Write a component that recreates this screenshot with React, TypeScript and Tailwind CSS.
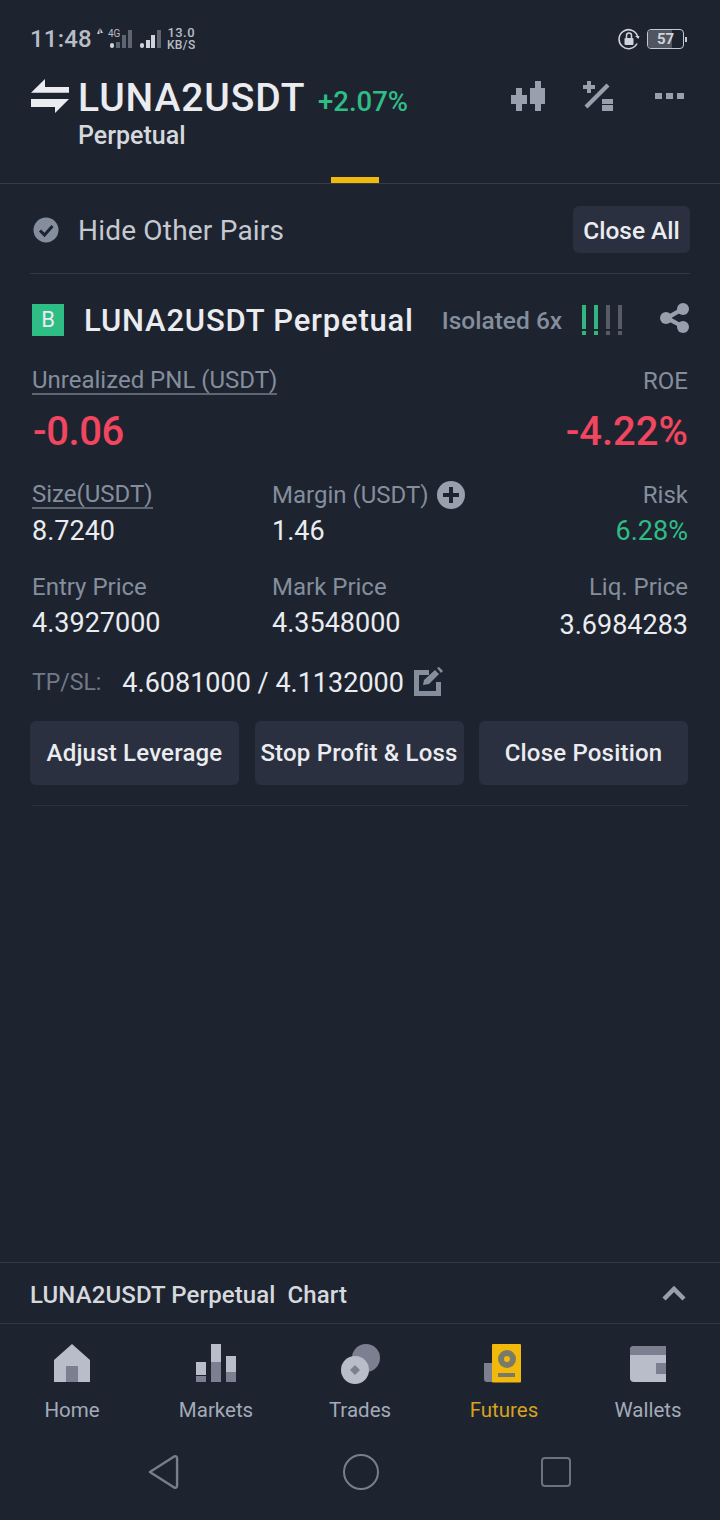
import { ReactNode } from "react";

const font = "font-['Roboto',sans-serif]";

function Stat({ label, value, align = "left", under = false, valueClass = "text-[#eaecef]", extra }: { label: string; value: string; align?: "left" | "right"; under?: boolean; valueClass?: string; extra?: ReactNode }) {
  return (
    <div className={align === "right" ? "flex flex-col items-end" : "flex flex-col items-start"}>
      <div className="flex h-[28px] items-center gap-[8px] text-[24px] leading-[28px] text-[#848e9c]">
        <span className={under ? "border-b-2 border-[#5e6673] leading-[26px]" : ""}>{label}</span>
        {extra}
      </div>
      <div className={`mt-[7px] h-[30px] text-[27px] leading-[30px] ${valueClass}`}>{value}</div>
    </div>
  );
}

function ActionButton({ children }: { children: ReactNode }) {
  return (
    <button className="flex h-[64px] w-[209px] items-center justify-center rounded-[6px] bg-[#2b3040] text-[24px] font-medium tracking-[0.2px] whitespace-nowrap text-[#eaecef]">
      {children}
    </button>
  );
}

function NavItem({ label, active, children }: { label: string; active?: boolean; children: ReactNode }) {
  return (
    <div className="flex w-[144px] flex-col items-center">
      <div className="h-[40px] w-[60px]">{children}</div>
      <div className={`mt-[13px] text-[20.500px] leading-[26px] ${active ? "text-[#d7a21f]" : "text-[#a3abb8]"}`}>{label}</div>
    </div>
  );
}

function StatusBar() {
  return (
    <div className="flex h-[30px] items-center justify-between pr-[33px] pl-[30px] text-[#b7bdc6]">
      <div className="flex items-center">
        <span className="text-[24px] leading-[30px] font-medium tracking-[0.2px]">11:48</span>
        <svg width="71" height="30" viewBox="0 0 71 30" className="ml-[4px]">
          <path d="M1 10l2.500-6v6zM4.500 4 7 9H4.500z" fill="#c4c8d0" />
          <text x="12" y="13" fontSize="10" fill="#b7bdc6" fontFamily="Roboto">4G</text>
          <rect x="14" y="19" width="4" height="5" rx="2" fill="#d0d3d9" />
          <rect x="20" y="18" width="4" height="6" fill="#5e6470" />
          <rect x="26" y="11" width="4" height="13" fill="#5e6470" />
          <rect x="32" y="6" width="4" height="18" fill="#5e6470" />
          <rect x="44" y="19" width="4" height="5" rx="2" fill="#d0d3d9" />
          <rect x="50" y="16" width="4" height="8" fill="#d0d3d9" />
          <rect x="55" y="11" width="4" height="13" fill="#d0d3d9" />
          <rect x="61" y="6" width="4" height="18" fill="#5e6470" />
        </svg>
        <div className="flex flex-col items-center text-[12px] leading-[12px] font-medium tracking-[0.4px]">
          <span className="text-[13px]">13.0</span>
          <span>KB/S</span>
        </div>
      </div>
      <div className="flex items-center gap-[7px]">
        <svg width="22" height="22" viewBox="0 0 22 22" fill="none">
          <path d="M19 15.500A9.500 9.500 0 1 1 19.500 8" stroke="#d0d3d9" strokeWidth="1.600" />
          <path d="M17 8h4.500l-1 3z" fill="#d0d3d9" />
          <rect x="6.500" y="10" width="9" height="7" rx="1" fill="#d0d3d9" />
          <path d="M8.500 10V7.500a2.500 2.500 0 0 1 5 0V10" stroke="#d0d3d9" strokeWidth="1.500" />
        </svg>
        <div className="flex items-center">
          <div className="relative flex h-[20px] w-[37px] items-center justify-center overflow-hidden rounded-[4px] border border-[#c4c8d0]">
            <div className="absolute inset-y-0 left-0 w-[24px] bg-[#4f5561]" />
            <span className="relative text-[15px] leading-[18px] font-bold text-[#d0d3d9]">57</span>
          </div>
          <div className="ml-[1px] h-[5px] w-[2px] bg-[#c4c8d0]" />
        </div>
      </div>
    </div>
  );
}

function Header() {
  return (
    <div className="mt-[21px] flex h-[75px] items-start pr-[36px] pl-[30px]">
      <svg width="40" height="36" viewBox="0 0 40 36" className="mt-[4px] shrink-0">
        <path d="M1 13.700 15 0v8h24v5.700zM1 20h38L25 34v-6H1z" fill="#eaecef" />
      </svg>
      <div className="ml-[8px] w-[240px]">
        <div className="mt-[1px] text-[39px] leading-[44px] font-medium tracking-[0.9px] text-[#eaecef]">LUNA2USDT</div>
        <div className="mt-[2px] text-[25px] leading-[28px] font-medium text-[#d5d8dd]">Perpetual</div>
      </div>
      <div className="mt-[10px] text-[27.500px] leading-[34px] font-medium text-[#2ebd85]">+2.07%</div>
      <div className="ml-auto flex items-start">
        <svg width="34" height="30" viewBox="0 0 34 30" className="mt-[6px]" fill="#9a9fae">
          <path d="M5 7h6v7h5v9h-5v7H5v-7H0v-9h5zM24 0h6v7h4v16h-4v7h-6v-7h-5V7h5z" />
        </svg>
        <svg width="32" height="30" viewBox="0 0 32 30" className="mt-[6px] ml-[37px]" fill="#9a9fae">
          <path d="M5 0h4v4h4v4H9v4H5V8H1V4h4z" />
          <path d="M2.500 24.500 24.500 2.500l3 3-22 22z" />
          <rect x="20" y="18" width="11" height="5" />
          <rect x="20" y="24" width="11" height="6" />
        </svg>
        <div className="mt-[18px] ml-[41px] flex gap-[4px]">
          <div className="h-[6px] w-[7px] bg-[#9a9fae]" />
          <div className="h-[6px] w-[7px] bg-[#9a9fae]" />
          <div className="h-[6px] w-[7px] bg-[#9a9fae]" />
        </div>
      </div>
    </div>
  );
}

function Position() {
  return (
    <div className="px-[32px]">
      <div className="mt-[26px] flex h-[40px] items-center">
        <div className="flex h-[32px] w-[32px] items-center justify-center bg-[#2ebd85] text-[22px] leading-none text-[#eaecef]">B</div>
        <div className="ml-[20px] pt-[1px] text-[31px] leading-[38px] font-medium tracking-[0.8px] text-[#eaecef]">LUNA2USDT Perpetual</div>
        <div className="ml-[28px] pt-[2px] text-[24.500px] leading-[30px] font-medium text-[#848e9c]">Isolated 6x</div>
        <div className="ml-[20px] flex gap-[8px]">
          {[true, true, false, false].map((on, i) => (
            <div key={i} className="flex flex-col gap-[2px]">
              <div className={`h-[24px] w-[4px] ${on ? "bg-[#33b582]" : "bg-[#565b66]"}`} />
              <div className={`h-[4px] w-[4px] ${on ? "bg-[#33b582]" : "bg-[#565b66]"}`} />
            </div>
          ))}
        </div>
        <svg width="30" height="30" viewBox="0 0 30 30" className="-mr-[2px] mb-[5px] ml-auto" fill="#9a9fae">
          <circle cx="23" cy="6" r="6" />
          <circle cx="23" cy="24" r="6" />
          <circle cx="6" cy="15" r="6" />
          <path d="M6 13 22 4l2 3.500L8 17zM8 13l16 9-2 3.500L6 17z" />
        </svg>
      </div>

      <div className="mt-[27px] flex justify-between text-[24px] leading-[28px] text-[#848e9c]">
        <span className="border-b-2 border-[#5e6673] leading-[26px]">Unrealized PNL (USDT)</span>
        <span>ROE</span>
      </div>
      <div className="mt-[15px] flex h-[44px] justify-between text-[40px] leading-[44px] font-medium text-[#f0465f]">
        <span className="pl-[1px] tracking-[-0.4px]">-0.06</span>
        <span>-4.22%</span>
      </div>

      <div className="mt-[27px] grid grid-cols-[240px_1fr_auto]">
        <Stat label="Size(USDT)" value="8.7240" under />
        <Stat
          label="Margin (USDT)"
          value="1.46"
          extra={
            <svg width="28" height="28" viewBox="0 0 28 28">
              <circle cx="14" cy="14" r="14" fill="#9a9fae" />
              <path d="M12 6h4v6h6v4h-6v6h-4v-6H6v-4h6z" fill="#1e2330" />
            </svg>
          }
        />
        <Stat label="Risk" value="6.28%" align="right" valueClass="text-[#2ebd85]" />
      </div>
      <div className="mt-[27px] grid grid-cols-[240px_1fr_auto]">
        <Stat label="Entry Price" value="4.3927000" />
        <Stat label="Mark Price" value="4.3548000" />
        <Stat label="Liq. Price" value="3.6984283" align="right" valueClass="pt-[2px] text-[#eaecef]" />
      </div>

      <div className="mt-[28px] flex h-[34px] items-center">
        <span className="text-[23px] text-[#727a87]">TP/SL:</span>
        <span className="ml-[21px] text-[27px] text-[#eaecef]">4.6081000 / 4.1132000</span>
        <svg width="30" height="30" viewBox="0 0 30 30" className="mb-[3px] ml-[9px]" fill="#848e9c">
          <path d="M1 3h15v5H6v16h17V15h5v14H1z" />
          <path d="M10 18l1-5L22 3l4 4-10 10zM24 1l2-1 4 4-2 2z" />
        </svg>
      </div>
    </div>
  );
}

export default function App() {
  return (
    <div className={`flex h-[1520px] w-[720px] flex-col overflow-hidden bg-[#1e2330] ${font}`}>
      <div className="h-[24px]" />
      <StatusBar />
      <Header />
      <div className="mt-[27px] flex h-[6px] pl-[331px]">
        <div className="h-[7px] w-[48px] bg-[#f0b90b]" />
      </div>
      <div className="h-px bg-[#373c48]" />

      <div className="mt-[22px] flex h-[47px] items-center justify-between pr-[30px] pl-[33px]">
        <div className="flex items-center">
          <svg width="26" height="26" viewBox="0 0 26 26">
            <circle cx="13" cy="13" r="12.500" fill="#848e9c" />
            <path d="M7 13.500 11.500 18 19.500 9" fill="none" stroke="#1e2330" strokeWidth="3" />
          </svg>
          <span className="ml-[19px] pt-[3px] text-[28px] leading-[34px] tracking-[0.2px] text-[#c5c9d0]">Hide Other Pairs</span>
        </div>
        <button className="flex h-[47px] w-[117px] items-center justify-center rounded-[6px] bg-[#2b3040] pt-[3px] text-[24.500px] font-medium text-[#eaecef]">Close All</button>
      </div>
      <div className="mx-[30px] mt-[20px] h-px bg-[#323744]" />

      <Position />

      <div className="mt-[21px] flex justify-between pr-[32px] pl-[30px]">
        <ActionButton>Adjust Leverage</ActionButton>
        <ActionButton>Stop Profit &amp; Loss</ActionButton>
        <ActionButton>Close Position</ActionButton>
      </div>
      <div className="mx-[32px] mt-[20px] h-px bg-[#2b303c]" />

      <div className="flex-1" />

      <div className="h-px bg-[#323744]" />
      <div className="flex h-[60px] items-center justify-between pr-[34px] pl-[30px]">
        <span className="pt-[3px] text-[24px] font-medium tracking-[0.1px] text-[#d5d8dd]">LUNA2USDT Perpetual&nbsp; Chart</span>
        <svg width="24" height="16" viewBox="0 0 24 16" fill="none">
          <path d="M2 14 12 4l10 10" stroke="#9a9fae" strokeWidth="4.500" />
        </svg>
      </div>
      <div className="h-px bg-[#323744]" />

      <div className="mt-[20px] flex">
        <NavItem label="Home">
          <svg width="60" height="40" viewBox="0 0 60 40">
            <path d="M30 0 48 16v22H12V16z" fill="#b9bdc9" />
            <rect x="24" y="22" width="12" height="16" fill="#7b7f8f" />
          </svg>
        </NavItem>
        <NavItem label="Markets">
          <svg width="60" height="40" viewBox="0 0 60 40">
            <rect x="10" y="18" width="10" height="13" fill="#b9bdc9" />
            <rect x="10" y="32" width="10" height="6" fill="#7b7f8f" />
            <rect x="25" y="0" width="10" height="18" fill="#b9bdc9" />
            <rect x="25" y="18" width="10" height="20" fill="#7b7f8f" />
            <rect x="40" y="12" width="10" height="16" fill="#b9bdc9" />
            <rect x="40" y="28" width="10" height="10" fill="#7b7f8f" />
          </svg>
        </NavItem>
        <NavItem label="Trades">
          <svg width="60" height="40" viewBox="0 0 60 40">
            <circle cx="36" cy="14" r="14" fill="#7b7f8f" />
            <circle cx="25" cy="26" r="14" fill="#b9bdc9" />
            <path d="M25 21l5 5-5 5-5-5z" fill="#7b7f8f" />
          </svg>
        </NavItem>
        <NavItem label="Futures" active>
          <svg width="60" height="40" viewBox="0 0 60 40">
            <path d="M10 19h9v19h-6a3 3 0 0 1-3-3z" fill="#7b7f8f" />
            <rect x="18" y="0" width="29" height="38.500" rx="1" fill="#f0b90b" />
            <circle cx="33" cy="15" r="9" fill="#7a7a68" />
            <circle cx="33" cy="15" r="3" fill="#f0b90b" />
            <rect x="24" y="29" width="17" height="4" fill="#7a7a68" />
          </svg>
        </NavItem>
        <NavItem label="Wallets">
          <svg width="60" height="40" viewBox="0 0 60 40">
            <path d="M12 6a4 4 0 0 1 4-4h32v36H16a4 4 0 0 1-4-4z" fill="#b9bdc9" />
            <path d="M12 6a4 4 0 0 1 4-4h32v9H12z" fill="#7b7f8f" />
            <rect x="38" y="19" width="10" height="11" fill="#7b7f8f" />
          </svg>
        </NavItem>
      </div>

      <div className="mt-[30px] mb-[29px] flex h-[38px] items-center justify-between pr-[149px] pl-[147px]">
        <svg width="33" height="38" viewBox="0 0 34 38" fill="none">
          <path d="M3 19 28 3q3-1 3 2v28q0 3-3 2z" stroke="#787e8a" strokeWidth="2.500" strokeLinejoin="round" />
        </svg>
        <div className="h-[36px] w-[36px] rounded-full border-[2.500px] border-[#787e8a]" />
        <div className="h-[30px] w-[30px] rounded-[4px] border-[2.500px] border-[#6c727e]" />
      </div>
    </div>
  );
}
